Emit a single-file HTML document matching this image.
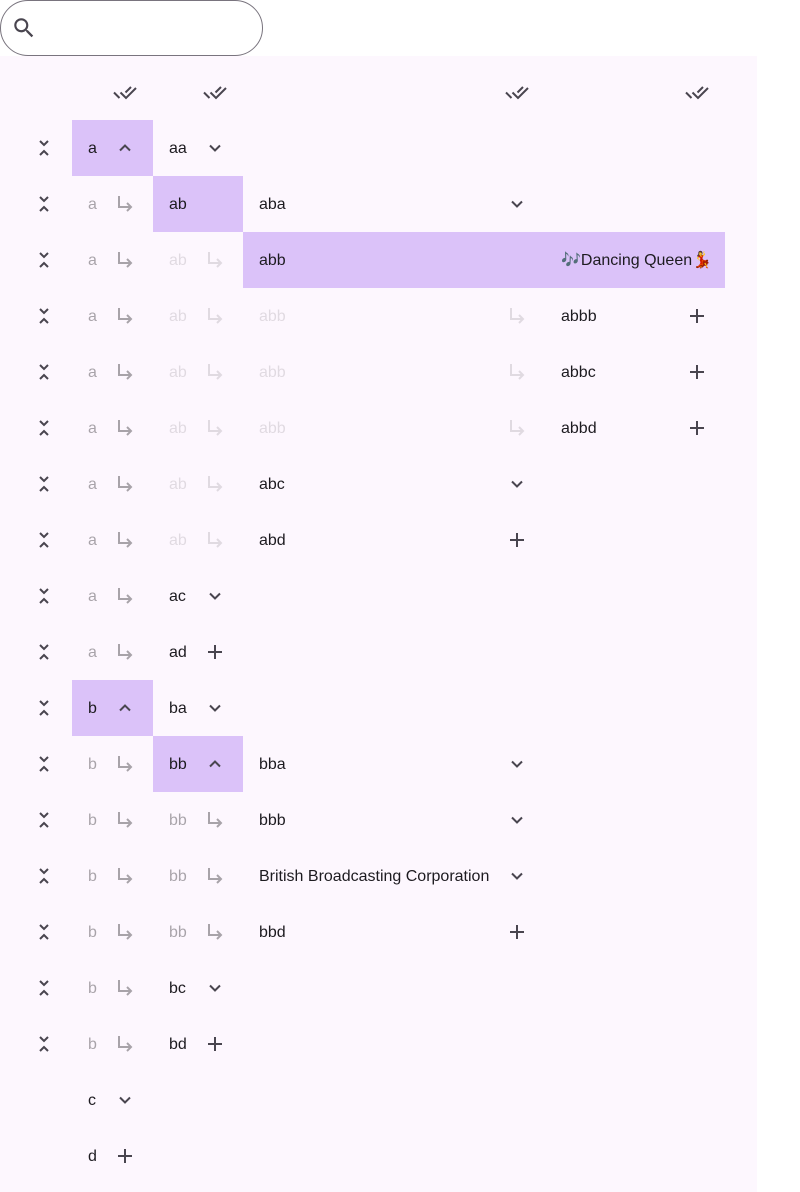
<!DOCTYPE html>
<html><head><meta charset="utf-8"><style>
body{margin:0;width:800px;height:1192px;background:#fff;position:relative;overflow:hidden;font-family:"Liberation Sans",Roboto,"Noto Sans CJK JP",sans-serif;font-size:16px;color:#1d1b20}
.s{position:absolute;left:0;top:0;width:261px;height:54px;border:1px solid #79747e;border-radius:28px}
.bg{position:absolute;left:0;top:56px;width:757px;height:1136px;background:#fdf7fe}
.h{position:absolute;background:#dbc2f9;height:56px}
.t{position:absolute;height:56px;line-height:58px;white-space:nowrap}
.f1{color:rgba(29,27,32,.38)}
.f2{color:rgba(29,27,32,.13)}
svg.i{position:absolute;width:24px;height:24px;fill:none;stroke:#49454f;stroke-width:2}
svg.i.f1{stroke:rgba(29,27,32,.38)}
svg.i.f2{stroke:rgba(29,27,32,.13)}
</style></head><body>
<div class="s"></div>
<svg style="position:absolute;left:11px;top:15px;width:26px;height:26px" viewBox="0 0 24 24"><path fill="#49454f" d="M15.5 14h-.79l-.28-.27C15.410 12.59 16 11.11 16 9.5 16 5.91 13.09 3 9.5 3S3 5.91 3 9.5 5.91 16 9.5 16c1.61 0 3.09-.59 4.23-1.57l.27.28v.79l5 4.99L20.490 19l-4.99-5zm-6 0C7.010 14 5 11.99 5 9.5S7.01 5 9.5 5 14 7.01 14 9.5 11.99 14 9.5 14z"/></svg>
<div class="bg"></div>
<svg width="0" height="0" style="position:absolute"><defs>
<symbol id="dn" viewBox="0 0 24 24"><path d="M7 9.5l5 5 5-5"/></symbol>
<symbol id="up" viewBox="0 0 24 24"><path d="M7 14.5l5-5 5 5"/></symbol>
<symbol id="ar" viewBox="0 0 24 24"><path d="M6 4v11h12M14 11l4 4-4 4"/></symbol>
<symbol id="pl" viewBox="0 0 24 24"><path d="M12 5v14M5 12h14"/></symbol>
<symbol id="co" viewBox="0 0 24 24"><path d="M8 5l4 4 4-4M8 19l4-4 4 4"/></symbol>
<symbol id="da" viewBox="0 0 24 24"><path d="M1 12.5l5.5 5.5M7.5 12.5l5.5 5.5L23 8M12.5 12.5L18 7"/></symbol>
</defs></svg>
<svg class="i" style="left:113px;top:80px"><use href="#da"/></svg>
<svg class="i" style="left:203px;top:80px"><use href="#da"/></svg>
<svg class="i" style="left:505px;top:80px"><use href="#da"/></svg>
<svg class="i" style="left:685px;top:80px"><use href="#da"/></svg>

<div class="h" style="left:72px;top:120px;width:81px"></div>
<div class="h" style="left:153px;top:176px;width:90px"></div>
<div class="h" style="left:243px;top:232px;width:482px"></div>
<div class="h" style="left:72px;top:680px;width:81px"></div>
<div class="h" style="left:153px;top:736px;width:90px"></div>

<svg class="i" style="left:32px;top:136px"><use href="#co"/></svg>
<svg class="i" style="left:32px;top:192px"><use href="#co"/></svg>
<svg class="i" style="left:32px;top:248px"><use href="#co"/></svg>
<svg class="i" style="left:32px;top:304px"><use href="#co"/></svg>
<svg class="i" style="left:32px;top:360px"><use href="#co"/></svg>
<svg class="i" style="left:32px;top:416px"><use href="#co"/></svg>
<svg class="i" style="left:32px;top:472px"><use href="#co"/></svg>
<svg class="i" style="left:32px;top:528px"><use href="#co"/></svg>
<svg class="i" style="left:32px;top:584px"><use href="#co"/></svg>
<svg class="i" style="left:32px;top:640px"><use href="#co"/></svg>
<svg class="i" style="left:32px;top:696px"><use href="#co"/></svg>
<svg class="i" style="left:32px;top:752px"><use href="#co"/></svg>
<svg class="i" style="left:32px;top:808px"><use href="#co"/></svg>
<svg class="i" style="left:32px;top:864px"><use href="#co"/></svg>
<svg class="i" style="left:32px;top:920px"><use href="#co"/></svg>
<svg class="i" style="left:32px;top:976px"><use href="#co"/></svg>
<svg class="i" style="left:32px;top:1032px"><use href="#co"/></svg>

<div class="t" style="left:88px;top:120px">a</div><svg class="i" style="left:113px;top:136px"><use href="#up"/></svg>
<div class="t" style="left:169px;top:120px">aa</div><svg class="i" style="left:203px;top:136px"><use href="#dn"/></svg>

<div class="t f1" style="left:88px;top:176px">a</div><svg class="i f1" style="left:113px;top:192px"><use href="#ar"/></svg>
<div class="t" style="left:169px;top:176px">ab</div>
<div class="t" style="left:259px;top:176px">aba</div><svg class="i" style="left:505px;top:192px"><use href="#dn"/></svg>

<div class="t f1" style="left:88px;top:232px">a</div><svg class="i f1" style="left:113px;top:248px"><use href="#ar"/></svg>
<div class="t f2" style="left:169px;top:232px">ab</div><svg class="i f2" style="left:203px;top:248px"><use href="#ar"/></svg>
<div class="t" style="left:259px;top:232px">abb</div>
<div class="t" style="left:561px;top:232px">🎶Dancing Queen💃</div>

<div class="t f1" style="left:88px;top:288px">a</div><svg class="i f1" style="left:113px;top:304px"><use href="#ar"/></svg>
<div class="t f2" style="left:169px;top:288px">ab</div><svg class="i f2" style="left:203px;top:304px"><use href="#ar"/></svg>
<div class="t f2" style="left:259px;top:288px">abb</div><svg class="i f2" style="left:505px;top:304px"><use href="#ar"/></svg>
<div class="t" style="left:561px;top:288px">abbb</div><svg class="i" style="left:685px;top:304px"><use href="#pl"/></svg>

<div class="t f1" style="left:88px;top:344px">a</div><svg class="i f1" style="left:113px;top:360px"><use href="#ar"/></svg>
<div class="t f2" style="left:169px;top:344px">ab</div><svg class="i f2" style="left:203px;top:360px"><use href="#ar"/></svg>
<div class="t f2" style="left:259px;top:344px">abb</div><svg class="i f2" style="left:505px;top:360px"><use href="#ar"/></svg>
<div class="t" style="left:561px;top:344px">abbc</div><svg class="i" style="left:685px;top:360px"><use href="#pl"/></svg>

<div class="t f1" style="left:88px;top:400px">a</div><svg class="i f1" style="left:113px;top:416px"><use href="#ar"/></svg>
<div class="t f2" style="left:169px;top:400px">ab</div><svg class="i f2" style="left:203px;top:416px"><use href="#ar"/></svg>
<div class="t f2" style="left:259px;top:400px">abb</div><svg class="i f2" style="left:505px;top:416px"><use href="#ar"/></svg>
<div class="t" style="left:561px;top:400px">abbd</div><svg class="i" style="left:685px;top:416px"><use href="#pl"/></svg>

<div class="t f1" style="left:88px;top:456px">a</div><svg class="i f1" style="left:113px;top:472px"><use href="#ar"/></svg>
<div class="t f2" style="left:169px;top:456px">ab</div><svg class="i f2" style="left:203px;top:472px"><use href="#ar"/></svg>
<div class="t" style="left:259px;top:456px">abc</div><svg class="i" style="left:505px;top:472px"><use href="#dn"/></svg>

<div class="t f1" style="left:88px;top:512px">a</div><svg class="i f1" style="left:113px;top:528px"><use href="#ar"/></svg>
<div class="t f2" style="left:169px;top:512px">ab</div><svg class="i f2" style="left:203px;top:528px"><use href="#ar"/></svg>
<div class="t" style="left:259px;top:512px">abd</div><svg class="i" style="left:505px;top:528px"><use href="#pl"/></svg>

<div class="t f1" style="left:88px;top:568px">a</div><svg class="i f1" style="left:113px;top:584px"><use href="#ar"/></svg>
<div class="t" style="left:169px;top:568px">ac</div><svg class="i" style="left:203px;top:584px"><use href="#dn"/></svg>

<div class="t f1" style="left:88px;top:624px">a</div><svg class="i f1" style="left:113px;top:640px"><use href="#ar"/></svg>
<div class="t" style="left:169px;top:624px">ad</div><svg class="i" style="left:203px;top:640px"><use href="#pl"/></svg>

<div class="t" style="left:88px;top:680px">b</div><svg class="i" style="left:113px;top:696px"><use href="#up"/></svg>
<div class="t" style="left:169px;top:680px">ba</div><svg class="i" style="left:203px;top:696px"><use href="#dn"/></svg>

<div class="t f1" style="left:88px;top:736px">b</div><svg class="i f1" style="left:113px;top:752px"><use href="#ar"/></svg>
<div class="t" style="left:169px;top:736px">bb</div><svg class="i" style="left:203px;top:752px"><use href="#up"/></svg>
<div class="t" style="left:259px;top:736px">bba</div><svg class="i" style="left:505px;top:752px"><use href="#dn"/></svg>

<div class="t f1" style="left:88px;top:792px">b</div><svg class="i f1" style="left:113px;top:808px"><use href="#ar"/></svg>
<div class="t f1" style="left:169px;top:792px">bb</div><svg class="i f1" style="left:203px;top:808px"><use href="#ar"/></svg>
<div class="t" style="left:259px;top:792px">bbb</div><svg class="i" style="left:505px;top:808px"><use href="#dn"/></svg>

<div class="t f1" style="left:88px;top:848px">b</div><svg class="i f1" style="left:113px;top:864px"><use href="#ar"/></svg>
<div class="t f1" style="left:169px;top:848px">bb</div><svg class="i f1" style="left:203px;top:864px"><use href="#ar"/></svg>
<div class="t" style="left:259px;top:848px">British Broadcasting Corporation</div><svg class="i" style="left:505px;top:864px"><use href="#dn"/></svg>

<div class="t f1" style="left:88px;top:904px">b</div><svg class="i f1" style="left:113px;top:920px"><use href="#ar"/></svg>
<div class="t f1" style="left:169px;top:904px">bb</div><svg class="i f1" style="left:203px;top:920px"><use href="#ar"/></svg>
<div class="t" style="left:259px;top:904px">bbd</div><svg class="i" style="left:505px;top:920px"><use href="#pl"/></svg>

<div class="t f1" style="left:88px;top:960px">b</div><svg class="i f1" style="left:113px;top:976px"><use href="#ar"/></svg>
<div class="t" style="left:169px;top:960px">bc</div><svg class="i" style="left:203px;top:976px"><use href="#dn"/></svg>

<div class="t f1" style="left:88px;top:1016px">b</div><svg class="i f1" style="left:113px;top:1032px"><use href="#ar"/></svg>
<div class="t" style="left:169px;top:1016px">bd</div><svg class="i" style="left:203px;top:1032px"><use href="#pl"/></svg>

<div class="t" style="left:88px;top:1072px">c</div><svg class="i" style="left:113px;top:1088px"><use href="#dn"/></svg>
<div class="t" style="left:88px;top:1128px">d</div><svg class="i" style="left:113px;top:1144px"><use href="#pl"/></svg>
</body></html>
